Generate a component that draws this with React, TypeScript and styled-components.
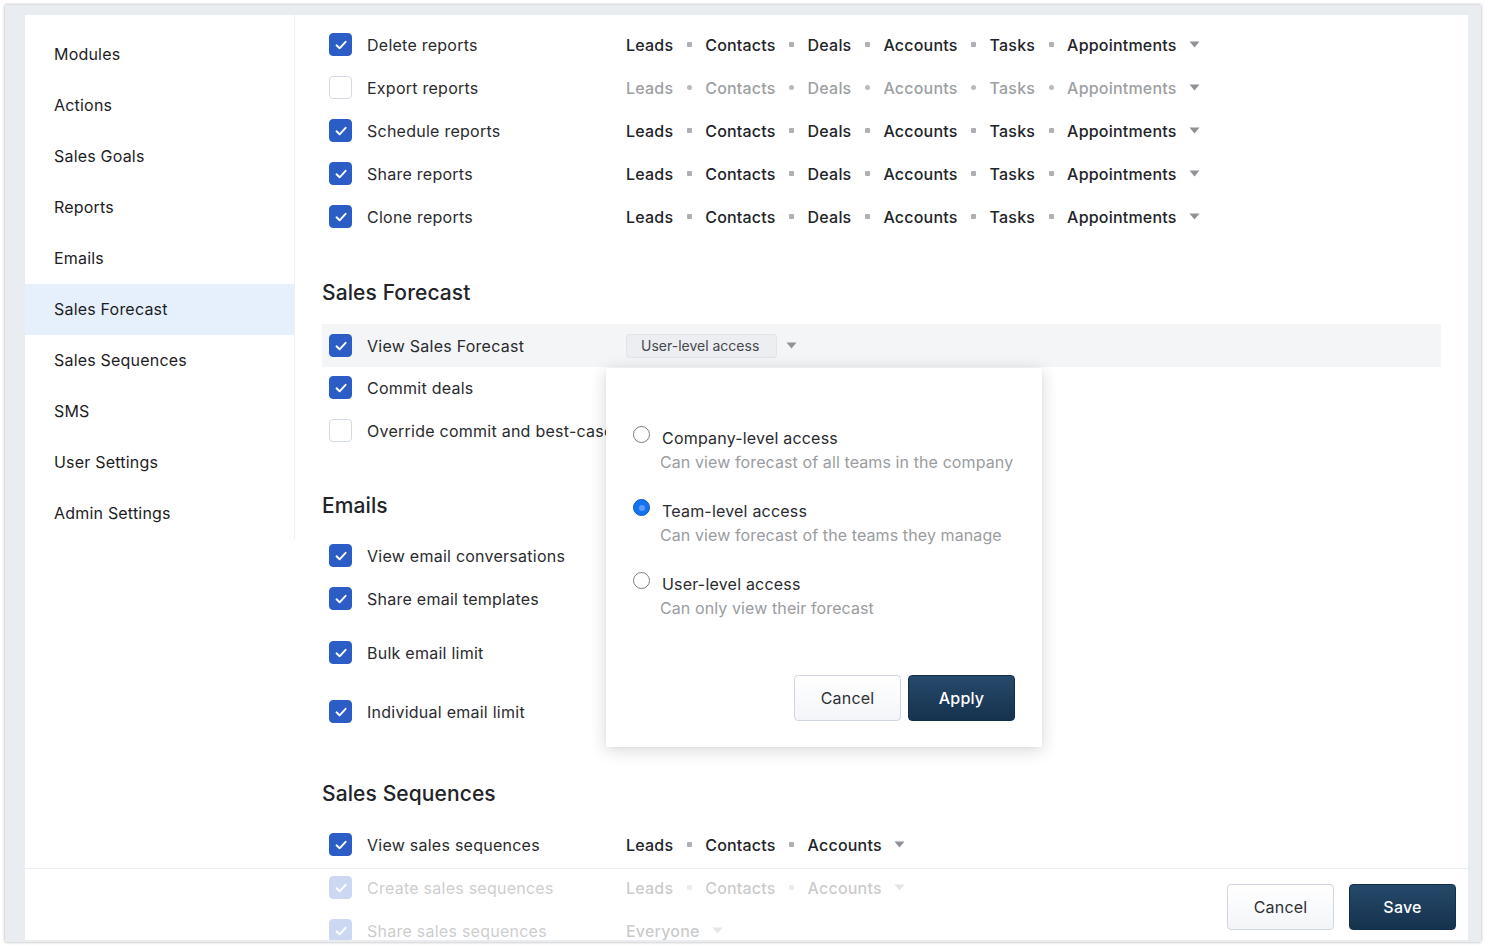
import React from 'react';
import styled, { createGlobalStyle } from 'styled-components';

const GlobalStyle = createGlobalStyle`
  html, body {
    margin: 0;
    padding: 0;
    background: #ffffff;
    font-family: Inter, "Noto Sans", "Liberation Sans", sans-serif;
    -webkit-font-smoothing: antialiased;
  }
  * {
    box-sizing: border-box;
  }
`;

const sidebarItems = [
  'Modules',
  'Actions',
  'Sales Goals',
  'Reports',
  'Emails',
  'Sales Forecast',
  'Sales Sequences',
  'SMS',
  'User Settings',
  'Admin Settings',
];

const allModules = ['Leads', 'Contacts', 'Deals', 'Accounts', 'Tasks', 'Appointments'];
const seqModules = ['Leads', 'Contacts', 'Accounts'];

const Page = styled.div`
  width: 1487px;
  height: 945px;
  padding: 5px 6px 3px 5px;
`;

const Window = styled.div`
  height: 100%;
  display: flex;
  background: #e9ecf0;
  padding: 10px 13px 2px 20px;
  box-shadow: 0 0 3px rgba(0, 0, 0, 0.35);
`;

const Surface = styled.div`
  flex: 1;
  display: flex;
  position: relative;
  overflow: hidden;
  background: #ffffff;
`;

const Sidebar = styled.nav`
  width: 270px;
  flex-shrink: 0;
  align-self: flex-start;
  padding-top: 14px;
  border-right: 1px solid #eeeff1;
`;

const SideItem = styled.div<{ $active?: boolean }>`
  height: 51px;
  display: flex;
  align-items: center;
  padding: 0 0 2px 29px;
  font-size: 16px;
  letter-spacing: 0.2px;
  color: #1d1d1f;
  background: ${p => (p.$active ? '#e6f0fc' : 'transparent')};
`;

const Main = styled.main`
  flex: 1;
  padding: 8px 27px 0 27px;
`;

const SectionTitle = styled.h2<{ $top?: number; $bottom?: number }>`
  margin: ${p => p.$top ?? 40}px 0 ${p => p.$bottom ?? 16}px 0;
  height: 30px;
  line-height: 30px;
  font-size: 21px;
  font-weight: 500;
  letter-spacing: 0.1px;
  color: #222428;
`;

const Row = styled.div<{ $highlight?: boolean; $gap?: number }>`
  position: relative;
  height: 43px;
  display: flex;
  align-items: center;
  padding-left: 7px;
  margin-top: ${p => p.$gap ?? 0}px;
  background: ${p => (p.$highlight ? '#f4f5f7' : 'transparent')};
`;

const Box = styled.span<{ $checked?: boolean }>`
  width: 23px;
  height: 23px;
  flex-shrink: 0;
  border-radius: 4px;
  display: flex;
  align-items: center;
  justify-content: center;
  margin-right: 15px;
  background: ${p => (p.$checked ? '#2c5cc5' : '#ffffff')};
  border: 1px solid ${p => (p.$checked ? '#2c5cc5' : '#d3dae3')};
`;

const Label = styled.span`
  width: 259px;
  flex-shrink: 0;
  font-size: 16px;
  letter-spacing: 0.25px;
  color: #2a2b2e;
  white-space: nowrap;
`;

const Tags = styled.div<{ $muted?: boolean }>`
  display: flex;
  align-items: center;
  font-size: 16px;
  font-weight: 500;
  letter-spacing: 0.2px;
  white-space: nowrap;
  color: ${p => (p.$muted ? '#9d9fa3' : '#222428')};
`;

const Dot = styled.span<{ $muted?: boolean }>`
  width: 5px;
  height: 5px;
  margin: 0 13.5px;
  border-radius: ${p => (p.$muted ? '50%' : '1px')};
  background: ${p => (p.$muted ? '#b9bbbf' : '#adb0b5')};
`;

const Caret = styled.svg<{ $gap?: number }>`
  width: 11px;
  height: 7px;
  flex-shrink: 0;
  margin-left: ${p => p.$gap ?? 12}px;
  fill: #8f9297;
`;

const SelectButton = styled.span`
  height: 24px;
  width: 151px;
  flex-shrink: 0;
  display: flex;
  align-items: center;
  padding: 0 12px 0 14px;
  border-radius: 3px;
  background: #eceef1;
  border: 1px solid #e1e4e8;
  font-size: 14px;
  letter-spacing: 0;
  white-space: nowrap;
  color: #45484d;
`;

const Popover = styled.div`
  position: absolute;
  top: calc(100% + 1px);
  left: 284px;
  z-index: 5;
  width: 436px;
  height: 379px;
  display: flex;
  flex-direction: column;
  padding: 58px 27px 26px 27px;
  background: #ffffff;
  box-shadow: 0 3px 16px rgba(0, 0, 0, 0.16), 0 0 2px rgba(0, 0, 0, 0.06);
`;

const Option = styled.div`
  display: flex;
  align-items: flex-start;
  margin-bottom: 25px;
`;

const Radio = styled.span<{ $checked?: boolean }>`
  width: 17px;
  height: 17px;
  margin: 0 12px 0 0;
  flex-shrink: 0;
  border-radius: 50%;
  display: flex;
  align-items: center;
  justify-content: center;
  background: ${p => (p.$checked ? '#1672ef' : '#ffffff')};
  border: ${p => (p.$checked ? '1px solid #0a58c8' : '1.5px solid #7a7d82')};

  &::after {
    content: '';
    display: ${p => (p.$checked ? 'block' : 'none')};
    width: 6px;
    height: 6px;
    border-radius: 50%;
    background: rgba(255, 255, 255, 0.3);
  }
`;

const OptionText = styled.div`
  display: flex;
  flex-direction: column;
  white-space: nowrap;
`;

const OptionTitle = styled.span`
  line-height: 24px;
  font-size: 16px;
  letter-spacing: 0.2px;
  color: #2a2b2e;
`;

const OptionHint = styled.span`
  line-height: 24px;
  margin-left: -2px;
  font-size: 16px;
  letter-spacing: 0.1px;
  color: #9a9ca0;
`;

const ButtonRow = styled.div`
  margin-top: auto;
  display: flex;
  justify-content: flex-end;
  gap: 7px;
`;

const Button = styled.button<{ $primary?: boolean }>`
  width: 107px;
  height: 46px;
  border-radius: 4px;
  font-family: inherit;
  font-size: 16px;
  letter-spacing: 0.2px;
  font-weight: ${p => (p.$primary ? 500 : 400)};
  color: ${p => (p.$primary ? '#ffffff' : '#2f3135')};
  background: ${p =>
    p.$primary
      ? 'linear-gradient(#26496b, #16324d)'
      : 'linear-gradient(#ffffff, #f3f5f8)'};
  border: 1px solid ${p => (p.$primary ? '#12304a' : '#cfd6df')};
`;

const Footer = styled.div`
  position: absolute;
  left: 0;
  right: 0;
  bottom: 0;
  height: 72px;
  z-index: 4;
  display: flex;
  align-items: center;
  justify-content: flex-end;
  gap: 15px;
  padding: 4px 12px 0 0;
  background: rgba(255, 255, 255, 0.76);
  border-top: 1px solid #eceef2;
`;

const Check = () => (
  <svg width='14' height='14' viewBox='0 0 14 14'>
    <path d='M2.5 7.3 L5.6 10.3 L11.6 3.8' fill='none' stroke='#ffffff' strokeWidth='1.9' strokeLinecap='round' strokeLinejoin='round' />
  </svg>
);

const CaretIcon = ({ gap }: { gap?: number }) => (
  <Caret viewBox='0 0 11 7' $gap={gap}>
    <path d='M0.5 0.5 H10.5 L5.5 6.5 Z' />
  </Caret>
);

const Checkbox = ({ checked }: { checked?: boolean }) => (
  <Box $checked={checked}>{checked && <Check />}</Box>
);

const ModuleTags = ({ items, muted }: { items: string[]; muted?: boolean }) => (
  <Tags $muted={muted}>
    {items.map((t, i) => (
      <React.Fragment key={t}>
        {i > 0 && <Dot $muted={muted} />}
        <span>{t}</span>
      </React.Fragment>
    ))}
    <CaretIcon />
  </Tags>
);

type PermRowProps = {
  label: string;
  checked?: boolean;
  gap?: number;
  highlight?: boolean;
  children?: React.ReactNode;
};

const PermRow = ({ label, checked, gap, highlight, children }: PermRowProps) => (
  <Row $gap={gap} $highlight={highlight}>
    <Checkbox checked={checked} />
    <Label>{label}</Label>
    {children}
  </Row>
);

const accessOptions = [
  { title: 'Company-level access', hint: 'Can view forecast of all teams in the company' },
  { title: 'Team-level access', hint: 'Can view forecast of the teams they manage', checked: true },
  { title: 'User-level access', hint: 'Can only view their forecast' },
];

const AccessPopover = () => (
  <Popover>
    {accessOptions.map(o => (
      <Option key={o.title}>
        <Radio $checked={o.checked} />
        <OptionText>
          <OptionTitle>{o.title}</OptionTitle>
          <OptionHint>{o.hint}</OptionHint>
        </OptionText>
      </Option>
    ))}
    <ButtonRow>
      <Button>Cancel</Button>
      <Button $primary>Apply</Button>
    </ButtonRow>
  </Popover>
);

export default function App() {
  return (
    <Page>
      <GlobalStyle />
      <Window>
        <Surface>
          <Sidebar>
            {sidebarItems.map(s => (
              <SideItem key={s} $active={s === 'Sales Forecast'}>
                {s}
              </SideItem>
            ))}
          </Sidebar>

          <Main>
            <PermRow label='Delete reports' checked>
              <ModuleTags items={allModules} />
            </PermRow>
            <PermRow label='Export reports'>
              <ModuleTags items={allModules} muted />
            </PermRow>
            <PermRow label='Schedule reports' checked>
              <ModuleTags items={allModules} />
            </PermRow>
            <PermRow label='Share reports' checked>
              <ModuleTags items={allModules} />
            </PermRow>
            <PermRow label='Clone reports' checked>
              <ModuleTags items={allModules} />
            </PermRow>

            <SectionTitle>Sales Forecast</SectionTitle>
            <PermRow label='View Sales Forecast' checked highlight>
              <SelectButton>User-level access</SelectButton>
              <CaretIcon gap={9} />
              <AccessPopover />
            </PermRow>
            <PermRow label='Commit deals' checked gap={-1} />
            <PermRow label='Override commit and best-case' />

            <SectionTitle $top={39} $bottom={13}>Emails</SectionTitle>
            <PermRow label='View email conversations' checked />
            <PermRow label='Share email templates' checked />
            <PermRow label='Bulk email limit' checked gap={11} />
            <PermRow label='Individual email limit' checked gap={16} />

            <SectionTitle $top={46} $bottom={14}>Sales Sequences</SectionTitle>
            <PermRow label='View sales sequences' checked>
              <ModuleTags items={seqModules} />
            </PermRow>
            <PermRow label='Create sales sequences' checked>
              <ModuleTags items={seqModules} />
            </PermRow>
            <PermRow label='Share sales sequences' checked>
              <Tags>
                <span>Everyone</span>
                <CaretIcon />
              </Tags>
            </PermRow>
          </Main>

          <Footer>
            <Button>Cancel</Button>
            <Button $primary>Save</Button>
          </Footer>
        </Surface>
      </Window>
    </Page>
  );
}
